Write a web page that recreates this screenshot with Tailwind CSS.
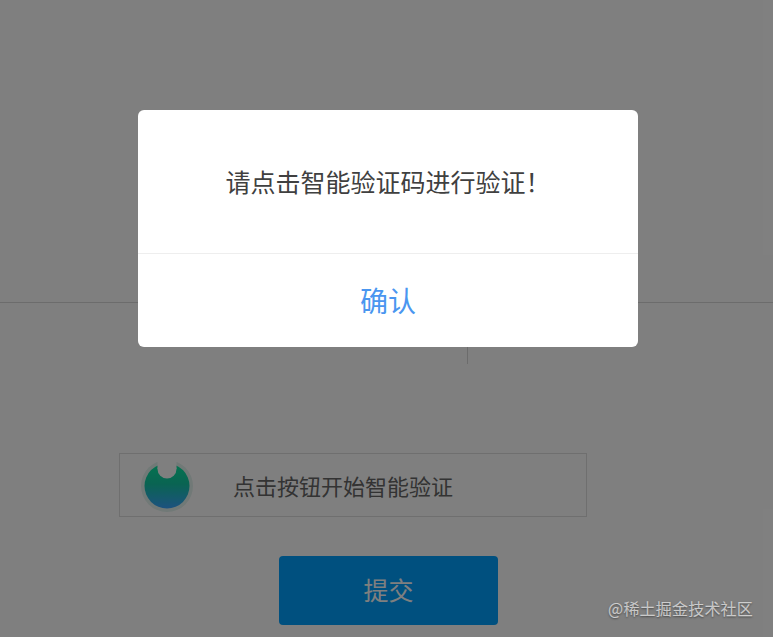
<!DOCTYPE html>
<html lang="zh">
<head>
<meta charset="utf-8">
<script src="https://cdn.jsdelivr.net/npm/@tailwindcss/browser@4"></script>
</head>
<body class="m-0 bg-white font-['Noto_Sans_CJK_SC','Noto_Sans',sans-serif]">
<div class="relative w-[773px] h-[637px] overflow-hidden bg-white">
  <div class="flex flex-col">
    <div class="h-[303px] border-b border-[#d8d8d8]"></div>
    <div class="pl-[467px]"><div class="w-px h-[61px] bg-[#d8d8d8]"></div></div>
    <div class="ml-[119px] mt-[89px] w-[468px] h-[64px] border border-[#dedede] flex items-center">
      <svg class="ml-[20px] w-[54px] h-[54px] shrink-0 blur-[0.7px]" viewBox="0 0 54 54">
        <defs>
          <linearGradient id="g" x1="0" y1="0" x2="0" y2="1">
            <stop offset="0" stop-color="#08e8a0"/>
            <stop offset="0.45" stop-color="#14c8a4"/>
            <stop offset="1" stop-color="#3aa4ff"/>
          </linearGradient>
        </defs>
        <circle cx="27" cy="28" r="26" fill="#e2f3ee"/>
        <circle cx="27" cy="28" r="22.5" fill="url(#g)"/>
        <circle cx="27" cy="11" r="9.5" fill="#ffffff"/>
        <rect x="17.5" y="0" width="19" height="11" fill="#ffffff"/>
      </svg>
      <span class="ml-[39px] text-[22px] leading-none text-[#666]">点击按钮开始智能验证</span>
    </div>
    <div class="ml-[279px] mt-[39px] w-[219px] h-[69px] rounded-[4px] bg-[#00a0ff] flex items-center justify-center text-white text-[25px] pb-[2px]">提交</div>
  </div>
  <div class="absolute inset-0 bg-black/50 pt-[110px] pl-[138px]">
    <div class="w-[500px] h-[237px] rounded-[6px] bg-white flex flex-col">
      <div class="h-[144px] border-b border-[#eeeeee] flex items-center justify-center text-[25px] text-[#404040] pt-[1px]">请点击智能验证码进行验证！</div>
      <div class="flex-1 flex items-center justify-center text-[28px] text-[#4a96f0] pb-[2px]">确认</div>
    </div>
  </div>
  <div class="absolute right-[20px] top-[596px] text-[16px] tracking-[0.2px] leading-[24px] text-white/65 [text-shadow:0_1px_2px_rgba(0,0,0,0.45)]">@稀土掘金技术社区</div>
</div>
</body>
</html>
